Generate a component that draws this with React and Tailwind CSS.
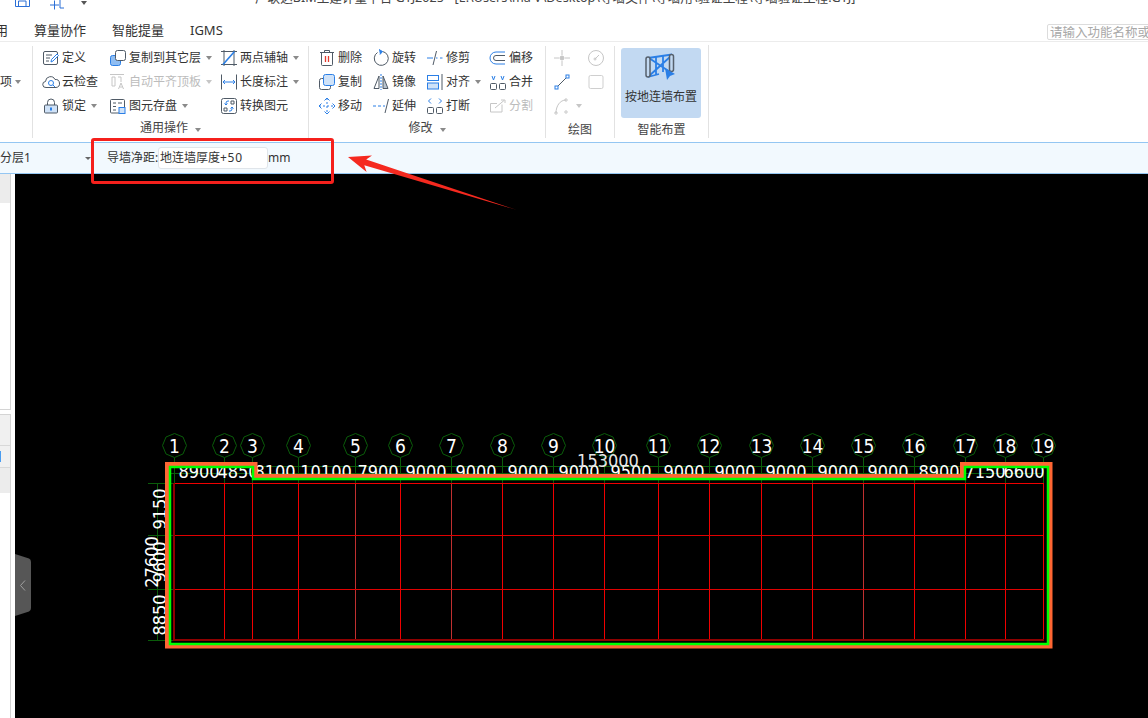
import React from 'react';

const D = '#4f5a66';
const B = '#2b7fe6';
const G = '#c6c6c6';
const L = '#cfe2f8';

const Ic = ({ children, color = D }) => (
  <svg width="18" height="18" viewBox="0 0 18 18" fill="none" stroke={color} strokeWidth="1" className="shrink-0">
    {children}
  </svg>
);

const icons = {
  define: (
    <Ic>
      <rect x="1.5" y="2.5" width="14" height="13" rx="1.5" />
      <path d="M4 6h6M4 9h4M4 12h3" />
      <path d="M9 13l.5-2.5L15 5l1.5 1.5L11 12z" stroke={B} fill="#fff" />
    </Ic>
  ),
  cloud: (
    <Ic>
      <path d="M5 14.5H4a3 3 0 0 1-.5-6A5 5 0 0 1 13 6.5a4 4 0 0 1 1 8z" />
      <circle cx="9" cy="10" r="2.5" stroke={B} />
      <path d="M11 12l2 2" stroke={B} />
    </Ic>
  ),
  lock: (
    <Ic>
      <path d="M5.5 8V5.5a3.5 3.5 0 0 1 7 0V8" />
      <rect x="2.5" y="8" width="13" height="8" rx="1" fill={L} />
      <path d="M9 10.5v3" stroke={B} strokeWidth="2" />
    </Ic>
  ),
  copyLayer: (
    <Ic>
      <rect x="1.5" y="6.5" width="10" height="10" rx="2" fill="#8fbdf2" stroke={B} />
      <rect x="6.5" y="1.5" width="10" height="10" rx="2" fill="#fff" />
    </Ic>
  ),
  autoFlush: (
    <Ic color={G}>
      <path d="M1 1.5h14M3 4h3v9H3zM9 4h3v5" />
      <path d="M9.5 16l2.5-6 2.5 6M10.5 14h3" />
    </Ic>
  ),
  store: (
    <Ic>
      <rect x="1.5" y="2.5" width="14" height="13.5" rx="1" />
      <path d="M4 6h3M9 6h4M4 9.5h3M4 13h3" />
      <rect x="10" y="10.5" width="6" height="6" fill={L} stroke={B} />
    </Ic>
  ),
  twoAxis: (
    <Ic>
      <path d="M1 2.5h16M1 15.5h16M4 1v16M14 1v16" />
      <path d="M3 15.5L14.5 2.5" stroke={B} strokeWidth="1.6" />
    </Ic>
  ),
  length: (
    <Ic>
      <path d="M1.5 1.5v15M16.5 1.5v15" />
      <path d="M3 9h12M5 7L3 9l2 2M13 7l2 2-2 2" stroke={B} />
    </Ic>
  ),
  convert: (
    <Ic>
      <rect x="1.5" y="1.5" width="15" height="15" rx="2" />
      <path d="M6 8V6a2 2 0 0 1 2-2h1M4.500 6.500L6 8l1.500-1.500M12 10v2a2 2 0 0 1-2 2H9M10.500 11.500L12 10l1.500 1.500" stroke={B} />
      <path d="M11 4h3v3h-3zM4 11h3v3H4z" />
    </Ic>
  ),
  del: (
    <Ic>
      <path d="M2 3.500h14M6.500 3.500V1.500h5v2M3.500 3.500v12a1 1 0 0 0 1 1h9a1 1 0 0 0 1-1v-12" />
      <path d="M7.500 7v6M10.500 7v6" stroke="#e23a2e" strokeWidth="1.300" />
    </Ic>
  ),
  rotate: (
    <Ic>
      <path d="M5.500 3.500a7 7 0 1 0 5-1" />
      <path d="M7 0.500l3.500 2-2.500 3" stroke={B} fill={B} />
    </Ic>
  ),
  trim: (
    <Ic>
      <path d="M1 9h6" stroke={B} />
      <path d="M10 9h1.500M14 9h2.500" stroke={B} />
      <path d="M10.500 2L7 16" />
    </Ic>
  ),
  offset: (
    <Ic>
      <path d="M16 3H7a6 6 0 0 0 0 12h9" stroke={B} />
      <path d="M16 6.500H7a2.500 2.500 0 0 0 0 5h9" />
    </Ic>
  ),
  copy: (
    <Ic>
      <rect x="1.500" y="5.500" width="11" height="11" rx="2" fill="#fff" />
      <rect x="5.500" y="1.500" width="11" height="11" rx="2" fill={L} stroke={B} />
    </Ic>
  ),
  mirror: (
    <Ic>
      <path d="M7 3L2 15.500h5z" />
      <path d="M11 3l5 12.500h-5z" fill="#b8c3ce" />
      <path d="M9 1v16" stroke={B} strokeDasharray="2 1" />
    </Ic>
  ),
  align: (
    <Ic>
      <rect x="1.500" y="2.500" width="11" height="5" stroke={B} />
      <rect x="1.500" y="10" width="11" height="6" stroke={B} fill={L} />
      <path d="M16 1v16" />
    </Ic>
  ),
  merge: (
    <Ic>
      <rect x="1.500" y="10.500" width="6" height="6" rx="1" />
      <rect x="10.500" y="10.500" width="6" height="6" rx="1" />
      <path d="M3 3l1.500 4L6 3M12 3l1.500 4L15 3" stroke={B} />
    </Ic>
  ),
  move: (
    <Ic color={B}>
      <path d="M9 1v16M1 9h16" strokeDasharray="2 2" />
      <path d="M6.500 3.500L9 1l2.500 2.500M6.500 14.500L9 17l2.500-2.500M3.500 6.500L1 9l2.500 2.500M14.500 6.500L17 9l-2.500 2.500" />
    </Ic>
  ),
  extend: (
    <Ic>
      <path d="M1 9h3M6 9h3M11 9h2" stroke={B} />
      <path d="M16.500 2L13 16" />
    </Ic>
  ),
  split: (
    <Ic>
      <rect x="1.500" y="10.500" width="6" height="6" rx="1" />
      <rect x="10.500" y="10.500" width="6" height="6" rx="1" />
      <path d="M5 1.500L2.500 4 5 6.500M13 1.500L15.500 4 13 6.500" stroke={B} />
    </Ic>
  ),
  cut: (
    <Ic color={G}>
      <path d="M13 7.500V15H1.500V6.500H8" />
      <path d="M6 11l9-7.500M12 3h4v3" />
    </Ic>
  ),
  point: (
    <Ic color={G}>
      <path d="M1 9h5M12 9h5M9 1v5M9 12v5" />
      <circle cx="9" cy="9" r="2" fill={G} />
    </Ic>
  ),
  dial: (
    <Ic color={G}>
      <circle cx="9" cy="9" r="7.500" />
      <path d="M8 10l4-4" />
      <circle cx="8" cy="10" r="1" />
    </Ic>
  ),
  line: (
    <Ic color={B}>
      <path d="M3.500 14.500L14.500 3.500" stroke={D} />
      <rect x="2" y="13" width="3" height="3" fill="#fff" />
      <rect x="13" y="2" width="3" height="3" fill="#fff" />
    </Ic>
  ),
  rect: (
    <Ic color="#cfcfcf">
      <rect x="2" y="2.500" width="14" height="13" rx="1.500" />
    </Ic>
  ),
  arc: (
    <Ic color={G}>
      <path d="M3 16C3 9 7 3 13 3" />
      <circle cx="3" cy="16" r="1.200" />
      <circle cx="13" cy="3" r="1.200" />
      <circle cx="13" cy="15" r="1.200" />
    </Ic>
  ),
};

const Caret = ({ color = 'border-t-[#8a8a8a]' }) => (
  <span className={`ml-[3px] inline-block h-0 w-0 border-x-[3.500px] border-t-[4px] border-x-transparent ${color}`} />
);

function Tool({ icon, label, caret, off }) {
  return (
    <div className="flex h-[24px] items-center gap-[2px]">
      {icons[icon]}
      {label && <span className={`whitespace-nowrap ${off ? 'text-[#bcbcbc]' : 'text-[#333]'}`}>{label}</span>}
      {caret && <Caret color={off ? 'border-t-[#c6c6c6]' : 'border-t-[#8a8a8a]'} />}
    </div>
  );
}

function GroupLabel({ text, caret, low }) {
  return (
    <div className={`flex h-[20px] shrink-0 items-center justify-center text-[#444] ${low ? 'pt-[4px]' : ''}`}>
      {text}
      {caret && <span className="ml-[4px]"><Caret /></span>}
    </div>
  );
}

const groupOne = [
  { icon: 'define', label: '定义' },
  { icon: 'cloud', label: '云检查' },
  { icon: 'lock', label: '锁定', caret: true },
  { icon: 'copyLayer', label: '复制到其它层', caret: true },
  { icon: 'autoFlush', label: '自动平齐顶板', caret: true, off: true },
  { icon: 'store', label: '图元存盘', caret: true },
  { icon: 'twoAxis', label: '两点辅轴', caret: true },
  { icon: 'length', label: '长度标注', caret: true },
  { icon: 'convert', label: '转换图元' },
];

const groupTwo = [
  { icon: 'del', label: '删除' },
  { icon: 'copy', label: '复制' },
  { icon: 'move', label: '移动' },
  { icon: 'rotate', label: '旋转' },
  { icon: 'mirror', label: '镜像' },
  { icon: 'extend', label: '延伸' },
  { icon: 'trim', label: '修剪' },
  { icon: 'align', label: '对齐', caret: true },
  { icon: 'split', label: '打断' },
  { icon: 'offset', label: '偏移' },
  { icon: 'merge', label: '合并' },
  { icon: 'cut', label: '分割', off: true },
];

const axes = [174, 224, 252, 298, 355, 400, 451, 502, 553, 604, 658, 709, 761, 812, 863, 914, 965, 1005, 1043];
const dimmed = [355, 451, 863];
const spans = [
  [199, '8900'], [238, '4850'], [275, '8100'], [326, '10100'], [378, '7900'], [426, '9000'],
  [476, '9000'], [528, '9000'], [579, '9000'], [631, '9500'], [684, '9000'], [735, '9000'],
  [786, '9000'], [838, '9000'], [888, '9000'], [939, '8900'], [985, '7150'], [1024, '6600'],
];
const cadFont = "font-['DejaVu_Sans_Condensed','DejaVu_Sans',sans-serif]";

// axis bubble, an octagon standing on a point
const bubble = (cx, cy, r) =>
  Array.from({ length: 8 }, (_, i) => {
    const a = (Math.PI / 4) * i - Math.PI / 2;
    return `${cx + r * Math.cos(a)},${cy + r * Math.sin(a)}`;
  }).join(' ');

function Drawing() {
  return (
    <svg viewBox="15 174 1133 544" className="block h-full w-full">
      {/* dimension lines */}
      <g stroke="#0a5c0a" strokeWidth="1">
        <path d="M170 466.500H1043M170 473.500H1043" />
        <path d="M157.500 483V640M148 483.500H173M148 535.500H173M148 589.500H173M148 640.500H173" />
        {axes.map((x) => (
          <path key={x} d={`M${x + 0.5} 458V483`} />
        ))}
        {axes.map((x) => (
          <polygon key={x} points={bubble(x + 0.5, 445.5, 12)} fill="#000" />
        ))}
      </g>

      {/* grid */}
      <g strokeWidth="1">
        {axes.map((x) => (
          <path key={x} d={`M${x + 0.5} 483V640`} stroke={dimmed.includes(x) ? '#c03030' : '#f00000'} />
        ))}
        <path d="M173 483.500H1043" stroke="#f00000" />
        <path d="M173 535.500H1043M173 589.500H1043" stroke="#e00000" />
        <path d="M173 640H1044M174 483V640" stroke="#8f0000" strokeWidth="2" />
      </g>

      {/* numbers */}
      <g className={`fill-white text-[18px] ${cadFont}`} textAnchor="middle">
        {axes.map((x, i) => (
          <text key={x} x={x + 0.5} y="453" className="text-[19px]">{i + 1}</text>
        ))}
        {spans.map(([x, t], i) => (
          <text key={i} x={x} y="477.500">{t}</text>
        ))}
        <text x="608" y="467" className="fill-[#e6e6e6]">153000</text>
        <text transform="translate(166 509) rotate(-90)">9150</text>
        <text transform="translate(166 562) rotate(-90)">9600</text>
        <text transform="translate(166 615) rotate(-90)">8850</text>
        <text transform="translate(158 562) rotate(-90)">27600</text>
      </g>

      {/* guide wall */}
      <polygon
        points="167.500,464.500 255,464.500 255,476.500 962.500,476.500 962.500,464.500 1050,464.500 1050,646 167.500,646"
        fill="none"
        stroke="#ff6633"
        strokeWidth="5"
      />
      <polygon
        points="170,467 253,467 253,479 965,479 965,467 1048,467 1048,644 170,644"
        fill="none"
        stroke="#00ff00"
        strokeWidth="2.500"
      />

      {/* collapse handle */}
      <path d="M15 554L29 558.500Q31 559 31 562V608Q31 611 29 611.500L15 616Z" fill="#565656" />
      <path d="M25 580.500L20.500 585.500L25 590.500" fill="none" stroke="#a0a0a0" strokeWidth="1" />
    </svg>
  );
}

export default function App() {
  return (
    <div className="relative flex h-[718px] w-[1148px] flex-col overflow-hidden bg-white font-['Noto_Sans','Noto_Sans_CJK_SC',sans-serif] text-[12px] text-[#333]">
      {/* title bar, cut off by the screenshot */}
      <div className="relative h-[20px] shrink-0 overflow-hidden">
        <svg width="70" height="10" viewBox="0 0 70 10" fill="none" stroke="#2b6fd6" className="absolute left-[14px] top-0">
          <path d="M1.500 -6V6.500H15.500V-6M4.500 6.500V1H12V6.500" />
          <path d="M36 5h9M40.500 0.500v9M46 -6V8H50" />
        </svg>
        <span className="absolute left-[81px] top-[1px] h-0 w-0 border-x-[3.500px] border-t-[4px] border-x-transparent border-t-[#555]" />
        <div className="absolute left-[255px] top-[-11px] whitespace-nowrap text-[12.600px] text-[#444]">
          广联达BIM土建计量平台 GTJ2025 - [E:\Users\ma V\Desktop\导墙文件\导墙用\验证工程\导墙验证工程.GTJ]
        </div>
      </div>

      {/* tabs */}
      <div className="relative flex h-[22px] shrink-0 items-center border-b border-[#ececec] text-[13px] text-[#333]">
        <span className="ml-[-5px] w-[39px]">用</span>
        <span className="w-[78px]">算量协作</span>
        <span className="w-[78px]">智能提量</span>
        <span>IGMS</span>
        <div className="absolute left-[1047px] top-[4px] h-[16px] w-[110px] overflow-hidden whitespace-nowrap rounded-[2px] border border-[#dcdcdc] pl-[2px] text-[12.500px] leading-[15px] text-[#a8a8a8]">
          请输入功能名称或
        </div>
      </div>

      {/* ribbon */}
      <div className="flex h-[100px] shrink-0 pb-[4px]">
        <div className="mt-[4px] w-[33px] border-r border-[#e2e2e2]">
          <div className="mt-[24px] flex h-[24px] items-center">
            项<Caret />
          </div>
        </div>

        <div className="mt-[4px] flex w-[276px] flex-col border-r border-[#e2e2e2]">
          <div className="grid h-[72px] shrink-0 grid-flow-col grid-cols-[67px_111px_1fr] grid-rows-3 pl-[9px]">
            {groupOne.map((t) => (
              <Tool key={t.label} {...t} />
            ))}
          </div>
          <GroupLabel text="通用操作" caret />
        </div>

        <div className="mt-[4px] flex w-[237px] flex-col border-r border-[#e2e2e2]">
          <div className="grid h-[72px] shrink-0 grid-flow-col grid-cols-[54px_54px_63px_1fr] grid-rows-3 pl-[9px]">
            {groupTwo.map((t) => (
              <Tool key={t.label} {...t} />
            ))}
          </div>
          <GroupLabel text="修改" caret />
        </div>

        <div className="mt-[4px] flex w-[69px] flex-col border-r border-[#e2e2e2]">
          <div className="grid h-[72px] shrink-0 grid-cols-[34px_1fr] grid-rows-3 pl-[7px]">
            <Tool icon="point" />
            <Tool icon="dial" />
            <Tool icon="line" />
            <Tool icon="rect" />
            <Tool icon="arc" caret off />
          </div>
          <GroupLabel text="绘图" low />
        </div>

        <div className="mt-[3px] flex w-[94px] flex-col border-r border-[#e2e2e2]">
          <div className="ml-[6px] mt-[3px] flex h-[70px] w-[80px] shrink-0 flex-col items-center rounded-[3px] bg-[#c2d9f2] pt-[5px]">
            <svg width="32" height="30" viewBox="0 0 32 30" fill="none" className="shrink-0">
              <path d="M3 5L27 1.500M3 24L14 21M4 5L25 19M4 23L26 3M11 4V22M18 3V19" stroke={B} strokeWidth="1.800" />
              <rect x="1" y="4" width="4" height="20" rx="2" fill="#c2d9f2" stroke="#56606c" strokeWidth="1.500" />
              <rect x="24.500" y="1.500" width="4" height="17" rx="2" fill="#c2d9f2" stroke="#56606c" strokeWidth="1.500" />
              <path d="M20 15L30 21L25 23L22 27Z" fill={B} />
            </svg>
            <span className="mt-[5px] whitespace-nowrap text-[#333]">按地连墙布置</span>
          </div>
          <GroupLabel text="智能布置" low />
        </div>
      </div>

      {/* options bar */}
      <div className="flex h-[32px] shrink-0 items-center border-y border-[#94c6f2] bg-[#f2f9fe]">
        <div className="flex w-[95px] items-center justify-between pr-[4px]">
          <span>分层1</span>
          <span className="h-0 w-0 border-x-[3px] border-t-[3px] border-x-transparent border-t-[#666]" />
        </div>
        <div className="ml-[12px] w-[51px] whitespace-nowrap">导墙净距:</div>
        <div className="flex h-[22px] w-[110px] items-center rounded-[3px] border border-[#e0e5ea] bg-white pl-[1px]">
          地连墙厚度<span className="tracking-[0.7px]">+50</span>
        </div>
        <div>mm</div>
      </div>

      {/* workspace */}
      <div className="flex min-h-0 flex-1">
        <div className="flex w-[15px] shrink-0 flex-col bg-white">
          <div className="h-[236px] w-[11px] border-b border-r border-[#d4d4d4]">
            <div className="h-[29px] bg-[#ececec]" />
          </div>
          <div className="mt-[4px] w-[11px] flex-1 border-r border-t border-[#d4d4d4]">
            <div className="h-[30px] bg-[#f0f0f0]" />
            <div className="flex h-[23px] items-center border-y border-[#d8d8d8] bg-[#f0f0f0]">
              <span className="h-[11px] w-px bg-[#4a9cf0]" />
            </div>
            <div className="h-[25px] bg-[#ececec]" />
          </div>
        </div>
        <div className="min-w-0 flex-1 bg-black">
          <Drawing />
        </div>
      </div>

      {/* red markup drawn over the screenshot */}
      <div className="absolute left-[91px] top-[138px] h-[46px] w-[243px] rounded-[3px] border-[3px] border-[#f5201c]" />
      <svg width="180" height="70" viewBox="345 150 180 70" className="absolute left-[345px] top-[150px]">
        <polygon points="348,157 372,155.500 366.200,159.500 517,210 364.300,165.300 366.600,172" fill="#f5291f" />
      </svg>
    </div>
  );
}
